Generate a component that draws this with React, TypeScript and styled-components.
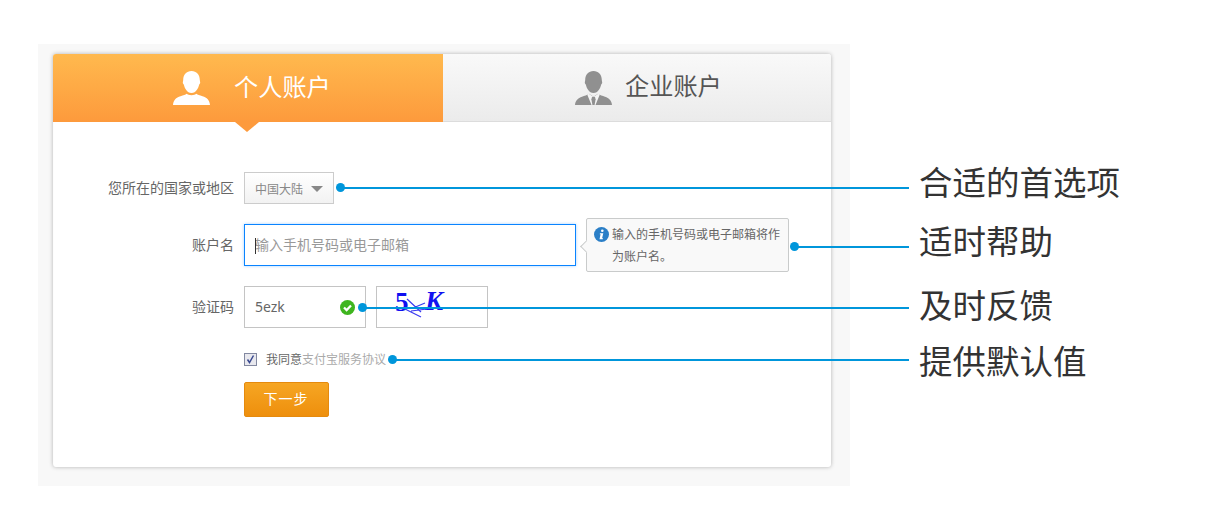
import React from "react";
import styled, { createGlobalStyle } from "styled-components";

const Global = createGlobalStyle`
  html, body { margin: 0; padding: 0; background: #fff; overflow: hidden; }
  body { font-family: "Noto Sans CJK SC", "Noto Sans", sans-serif; }
  * { box-sizing: border-box; }
`;

const Stage = styled.div`
  position: relative;
  width: 1210px;
  height: 524px;
  padding: 44px 0 0 38px;
`;

const Panel = styled.div`
  width: 812px;
  height: 442px;
  padding: 10px 19px 19px 15px;
  background: #f8f8f8;
`;

const Card = styled.div`
  width: 778px;
  height: 413px;
  background: #fff;
  border-radius: 3px;
  box-shadow: inset 1px 0 1px -1px rgba(0, 0, 0, 0.1), 0 0 4px rgba(0, 0, 0, 0.28);
`;

const Tabs = styled.div`
  display: flex;
  height: 68px;
`;

const Tab = styled.div<{ $active?: boolean; $pad: number; $gap: number; $w: number }>`
  position: relative;
  display: flex;
  align-items: center;
  width: ${(p) => p.$w}px;
  padding-left: ${(p) => p.$pad}px;
  gap: ${(p) => p.$gap}px;
  font-size: 24.2px;
  color: ${(p) => (p.$active ? "#fff" : "#555")};
  background: ${(p) =>
    p.$active
      ? "linear-gradient(#ffb94e, #fd9a3c)"
      : "linear-gradient(#f9f9f9, #ebebeb)"};
  border-bottom: ${(p) => (p.$active ? "none" : "1px solid #dcdcdc")};
  border-radius: ${(p) => (p.$active ? "3px 0 0 0" : "0 3px 0 0")};
`;

const TabLabel = styled.span`
  margin-bottom: 6px;
`;

const TabArrow = styled.span`
  position: absolute;
  left: 182px;
  top: 68px;
  width: 0;
  height: 0;
  border-left: 12px solid transparent;
  border-right: 12px solid transparent;
  border-top: 10px solid #fd9a3c;
`;

const TabIcon = styled.svg`
  display: block;
  width: 37px;
  height: 34px;
  flex: none;
`;

const Form = styled.div`
  padding-top: 50px;
`;

const Row = styled.div<{ $h: number; $mb: number }>`
  display: flex;
  align-items: center;
  height: ${(p) => p.$h}px;
  margin-bottom: ${(p) => p.$mb}px;
`;

const Label = styled.div`
  flex: none;
  width: 181px;
  margin-right: 10px;
  padding-bottom: 3px;
  text-align: right;
  font-size: 14px;
  line-height: 20px;
  color: #666;
`;

const Select = styled.div`
  display: flex;
  align-items: center;
  width: 90px;
  height: 32px;
  padding-left: 10px;
  gap: 8px;
  font-size: 12px;
  color: #888;
  border: 1px solid #ccc;
  background: linear-gradient(#fff, #f2f2f2);
`;

const Caret = styled.span`
  width: 0;
  height: 0;
  margin-top: 2px;
  border-left: 6px solid transparent;
  border-right: 6px solid transparent;
  border-top: 6px solid #888;
`;

const AccountField = styled.div`
  position: relative;
  width: 332px;
  height: 42px;
  border: 1px solid #0a84ff;
  box-shadow: 0 0 3px rgba(10, 132, 255, 0.35);
  &::before {
    content: "";
    position: absolute;
    left: 10px;
    top: 13px;
    width: 1px;
    height: 16px;
    background: #333;
  }
`;

const AccountInput = styled.input`
  width: 100%;
  height: 100%;
  padding: 0 10px 2px;
  border: 0;
  outline: 0;
  background: transparent;
  font: 14px "Noto Sans CJK SC", "Noto Sans", sans-serif;
  color: #666;
  &::placeholder { color: #999; opacity: 1; }
`;

const Tip = styled.div`
  position: relative;
  flex: none;
  display: flex;
  width: 203px;
  height: 54px;
  margin-left: 10px;
  padding: 4px 0 0 7px;
  gap: 3px;
  background: #f9f9f9;
  border: 1px solid #c9cbcb;
  border-radius: 2px;
  &::before {
    content: "";
    position: absolute;
    left: -5px;
    top: 23px;
    width: 8px;
    height: 8px;
    background: #f9f9f9;
    border-left: 1px solid #c9cbcb;
    border-bottom: 1px solid #c9cbcb;
    transform: rotate(45deg);
  }
`;

const InfoIcon = styled.svg`
  flex: none;
  width: 15px;
  height: 15px;
  margin-top: 4px;
`;

const TipText = styled.div`
  width: 175px;
  font-size: 12px;
  line-height: 22px;
  color: #666;
`;

const CaptchaField = styled.div`
  display: flex;
  align-items: center;
  justify-content: space-between;
  width: 122px;
  height: 42px;
  padding: 0 10px;
  border: 1px solid #c4c4c4;
  font-size: 14px;
  font-family: "Noto Sans", sans-serif;
  color: #666;
`;

const FieldText = styled.span`
  margin-bottom: 1px;
`;

const CheckIcon = styled.svg`
  width: 15px;
  height: 15px;
  margin: 1px 0 0 0;
`;

const CaptchaImage = styled.div`
  width: 112px;
  height: 42px;
  margin-left: 10px;
  border: 1px solid #c4c4c4;
`;

const CaptchaSvg = styled.svg`
  display: block;
  width: 110px;
  height: 40px;
`;

const Agree = styled.div`
  display: flex;
  align-items: center;
  margin-left: 191px;
  font-size: 12px;
  line-height: 14px;
  color: #666;
`;

const CheckBox = styled.svg`
  width: 13px;
  height: 13px;
  margin-right: 9px;
`;

const AgreeLink = styled.span`
  color: #aaa;
`;

const NextButton = styled.button`
  display: block;
  width: 85px;
  height: 35px;
  margin-left: 191px;
  padding: 0 1px 3px 0;
  border: 1px solid #e58a0e;
  border-radius: 2px;
  background: linear-gradient(#f6a623, #ee8f0d);
  color: #fff;
  font: 14px "Noto Sans CJK SC", sans-serif;
  letter-spacing: 1px;
`;

const Callout = styled.div<{ $x: number; $y: number }>`
  position: absolute;
  left: ${(p) => p.$x}px;
  top: ${(p) => p.$y - 4.5}px;
  display: flex;
  align-items: center;
  height: 9px;
`;

const Dot = styled.span`
  flex: none;
  width: 9px;
  height: 9px;
  border-radius: 50%;
  background: #0096db;
`;

const Line = styled.span<{ $w: number }>`
  flex: none;
  width: ${(p) => p.$w}px;
  height: 2px;
  margin-left: -1px;
  background: #0096db;
`;

const Note = styled.span<{ $shift: number }>`
  flex: none;
  margin-left: 10px;
  font-size: 33.5px;
  line-height: 40px;
  color: #333;
  white-space: nowrap;
  transform: translateY(${(p) => p.$shift}px);
`;

const HEAD =
  "M18.5 0c5 0 8.3 3.6 8.3 9 0 1 .4 1.6.4 2.6 0 1-.7 1.6-1.1 2.2-.7 3.3-3 8.2-7.6 8.2s-6.9-4.9-7.6-8.2c-.4-.6-1.1-1.2-1.1-2.2 0-1 .4-1.6.4-2.6 0-5.4 3.3-9 8.300-9z";

const callouts = [
  { x: 336, y: 187.5, w: 565, shift: -7, text: "合适的首选项" },
  { x: 790, y: 246.5, w: 111, shift: -7, text: "适时帮助" },
  { x: 358, y: 307.5, w: 543, shift: -4, text: "及时反馈" },
  { x: 388, y: 359.5, w: 513, shift: 0, text: "提供默认值" },
];

export default function App() {
  return (
    <Stage>
      <Global />
      <Panel>
        <Card>
          <Tabs>
            <Tab $active $w={390} $pad={120} $gap={24}>
              <TabIcon viewBox="0 0 37 34">
                <path fill="#fff" d={HEAD} />
                <path
                  fill="#fff"
                  d="M0 34c.4-5 3-7.400 7.500-8.800 3-.9 5-1.400 6-2.400 1 .9 2.900 1.400 5 1.400s4-.5 5-1.400c1 1 3 1.500 6 2.400 4.500 1.400 7.100 3.800 7.500 8.800z"
                />
              </TabIcon>
              <TabLabel>个人账户</TabLabel>
              <TabArrow />
            </Tab>
            <Tab $w={388} $pad={132} $gap={13}>
              <TabIcon viewBox="0 0 37 34">
                <path fill="#909090" d={HEAD} />
                <path
                  fill="#909090"
                  d="M0 34c.4-4.500 3-6.800 7-8.200 2.500-.9 5-1.600 7-3l4.500 3 4.500-3c2 1.400 4.500 2.100 7 3 4 1.400 6.600 3.700 7 8.200z"
                />
                <path fill="#f4f4f4" d="M13.500 22.500l5 3.500 5-3.500 1.200 1.200-4.200 10.300h-4l-4.200-10.300z" />
                <path fill="#909090" d="M17 26h3l.6 2.200-1 5.800h-2.200l-1-5.800z" />
              </TabIcon>
              <TabLabel>企业账户</TabLabel>
            </Tab>
          </Tabs>
          <Form>
            <Row $h={32} $mb={20}>
              <Label>您所在的国家或地区</Label>
              <Select>
                中国大陆
                <Caret />
              </Select>
            </Row>
            <Row $h={42} $mb={20}>
              <Label>账户名</Label>
              <AccountField>
                <AccountInput placeholder="输入手机号码或电子邮箱" readOnly />
              </AccountField>
              <Tip>
                <InfoIcon viewBox="0 0 15 15">
                  <circle cx="7.5" cy="7.500" r="7.500" fill="#2b7fc7" />
                  <circle cx="8.300" cy="3.700" r="1.300" fill="#fff" />
                  <path fill="#fff" d="M6 6.300h3.300l-1.200 4.900h1l-.3 1H5.500l1.100-4.900h-.9z" />
                </InfoIcon>
                <TipText>输入的手机号码或电子邮箱将作为账户名。</TipText>
              </Tip>
            </Row>
            <Row $h={42} $mb={24}>
              <Label>验证码</Label>
              <CaptchaField>
                <FieldText>5ezk</FieldText>
                <CheckIcon viewBox="0 0 15 15">
                  <circle cx="7.500" cy="7.500" r="7.500" fill="#3fb51f" />
                  <path d="M4 7.500l2.600 2.600L11 5.500" fill="none" stroke="#fff" strokeWidth="2.200" />
                </CheckIcon>
              </CaptchaField>
              <CaptchaImage>
                <CaptchaSvg viewBox="0 0 110 40">
                  <text x="18" y="24" fontFamily="Liberation Serif" fontWeight="700" fontSize="27" fill="#0f0ff0">5</text>
                  <text x="48" y="23" fontFamily="Liberation Serif" fontWeight="700" fontStyle="italic" fontSize="27" fill="#1212f0">K</text>
                  <path d="M30 12l14 13M26 21l18 9M36 21l12-5M34 24l16-2" fill="none" stroke="#3a3af0" strokeWidth="1.200" />
                </CaptchaSvg>
              </CaptchaImage>
            </Row>
            <Row $h={14} $mb={16}>
              <Agree>
                <CheckBox viewBox="0 0 13 13">
                  <rect x="0.500" y="0.500" width="12" height="12" fill="#e8e8ee" stroke="#8288a0" />
                  <path d="M3.500 6.500l2 3 4-7" fill="none" stroke="#3a4a90" strokeWidth="1.500" />
                </CheckBox>
                我同意<AgreeLink>支付宝服务协议</AgreeLink>
              </Agree>
            </Row>
            <NextButton>下一步</NextButton>
          </Form>
        </Card>
      </Panel>
      {callouts.map((c) => (
        <Callout key={c.text} $x={c.x} $y={c.y}>
          <Dot />
          <Line $w={c.w} />
          <Note $shift={c.shift}>{c.text}</Note>
        </Callout>
      ))}
    </Stage>
  );
}
